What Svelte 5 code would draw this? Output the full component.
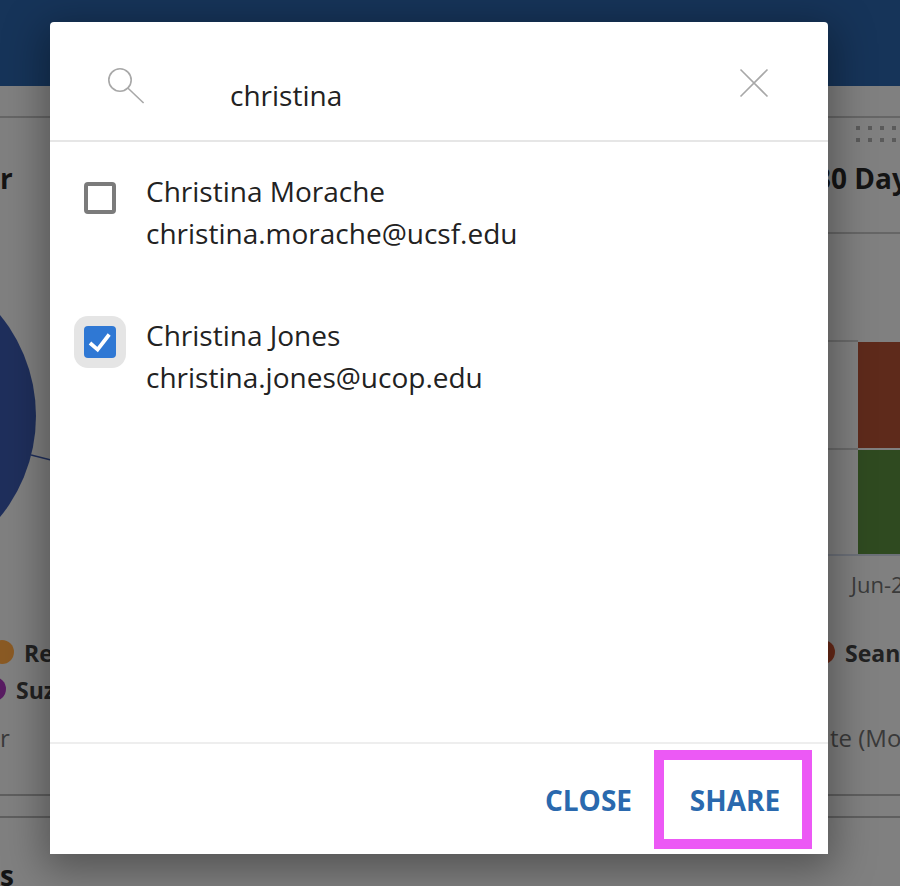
<script>
  let people = $state([
    { name: 'Christina Morache', email: 'christina.morache@ucsf.edu', checked: false },
    { name: 'Christina Jones', email: 'christina.jones@ucop.edu', checked: true }
  ]);
  let query = $state('christina');
  const dots = Array.from({ length: 8 });
</script>

<div class="page">
  <div class="topbar"></div>

  <!-- dashboard behind the dialog, only the edges show -->
  <div class="back">
    <div class="rule r1"></div>
    <div class="rule r2"></div>
    <div class="rule r3"></div>
    <div class="rule r4"></div>
    <div class="grip">
      {#each dots as _}<i></i>{/each}
    </div>
    <b class="bt t-r">r</b>
    <b class="bt t-day">30 Days</b>
    <div class="pie"></div>
    <svg class="leader" width="20" height="10"><path d="M0 1 L20 6" stroke="#1f2f5c" stroke-width="1.4" fill="none" /></svg>
    <div class="tick tk1"></div>
    <div class="tick tk2"></div>
    <div class="bar red"></div>
    <div class="bar green"></div>
    <div class="axis"></div>
    <span class="soft jun">Jun-2</span>
    <span class="dot d1"></span><b class="bt re">Re</b>
    <span class="dot d2"></span><b class="bt suz">Suz</b>
    <span class="dot d3"></span><b class="bt sean">Sean</b>
    <span class="soft lr">r</span>
    <span class="soft mo">te (Mo</span>
    <b class="bt s">s</b>
  </div>

  <div class="overlay">
    <div class="modal">
      <header>
        <svg class="search" width="38" height="38" viewBox="0 0 38 38" fill="none" stroke="#a8a8a8" stroke-width="1.6">
          <circle cx="13" cy="12" r="11.2" />
          <path d="M20.8 20 L36.6 35" />
        </svg>
        <input bind:value={query} />
        <svg class="x" width="30" height="30" viewBox="0 0 30 30" stroke="#a8a8a8" stroke-width="1.6">
          <path d="M1.5 1.5 L28.5 28.5 M28.5 1.5 L1.5 28.5" />
        </svg>
      </header>

      <div class="list">
        {#each people as p}
          <label class="person">
            <span class="halo" class:on={p.checked}>
              <span class="box" class:checked={p.checked}>
                {#if p.checked}
                  <svg width="24" height="24" viewBox="0 0 24 24" fill="none" stroke="#fff" stroke-width="3.8">
                    <path d="M2 13 L9.6 19.6 L21.2 4.5" />
                  </svg>
                {/if}
              </span>
            </span>
            <input type="checkbox" bind:checked={p.checked} />
            <span class="who">
              <span>{p.name}</span>
              <span>{p.email}</span>
            </span>
          </label>
        {/each}
      </div>

      <footer>
        <button class="action">CLOSE</button>
        <button class="action share">SHARE</button>
      </footer>
    </div>
  </div>
</div>

<style>
  :global(body) {
    margin: 0;
    font-family: "Open Sans", sans-serif;
  }
  .page {
    position: relative;
    width: 900px;
    height: 886px;
    overflow: hidden;
    background: #808080;
  }
  .topbar {
    height: 86px;
    background: #163459;
  }

  .back {
    position: absolute;
    inset: 0;
    overflow: hidden;
    color: #141414;
    font-size: 26px;
  }
  .back > * {
    position: absolute;
    white-space: nowrap;
  }
  .rule {
    left: 0;
    right: 0;
    height: 2px;
    background: #666;
  }
  .r1 { top: 116px; }
  .r2 { top: 232px; left: 828px; }
  .r3 { top: 794px; background: #5f5f5f; }
  .r4 { top: 816px; background: #5f5f5f; }
  .grip {
    left: 856px;
    top: 126px;
    display: grid;
    grid-template-columns: repeat(4, 4px);
    gap: 8px;
  }
  .grip i {
    width: 4px;
    height: 4px;
    background: #5a5a5a;
  }
  .bt {
    font-weight: 700;
    line-height: 1;
  }
  .t-r { left: 0; top: 164px; font-size: 28px; }
  .t-day { left: 815px; top: 164px; font-size: 28px; }
  .pie {
    left: -284px;
    top: 256px;
    width: 320px;
    height: 320px;
    border-radius: 50%;
    background: #1f2f5c;
  }
  .leader { left: 31px; top: 454px; }
  .tick {
    left: 828px;
    width: 30px;
    height: 2px;
    background: #6a6a6a;
  }
  .tk1 { top: 340px; }
  .tk2 { top: 448px; }
  .bar {
    left: 858px;
    width: 42px;
  }
  .red { top: 342px; height: 106px; background: #5e2a1b; }
  .green { top: 450px; height: 104px; background: #2f4a20; }
  .axis {
    left: 828px;
    width: 72px;
    top: 554px;
    height: 2px;
    background: #6c7078;
  }
  .soft {
    color: #3a3a3a;
    line-height: 1;
  }
  .jun { left: 851px; top: 573px; font-size: 22px; }
  .dot {
    width: 24px;
    height: 24px;
    border-radius: 50%;
  }
  .d1 { left: -10px; top: 640px; background: #8a5a24; }
  .d2 { left: -18px; top: 677px; background: #591c62; }
  .d3 { left: 811px; top: 640px; background: #6a2a18; }
  .re { left: 24px; top: 642px; font-size: 23px; color: #222; }
  .suz { left: 16px; top: 679px; font-size: 23px; color: #222; }
  .sean { left: 845px; top: 642px; font-size: 23px; color: #222; }
  .lr { left: 0; top: 726px; font-size: 24px; }
  .mo { left: 830px; top: 726px; font-size: 24px; }
  .s { left: 0; top: 861px; font-size: 28px; }

  .overlay {
    position: absolute;
    inset: 0;
    box-sizing: border-box;
    padding: 22px 72px 32px 50px;
    display: flex;
  }
  .modal {
    flex: 1;
    display: flex;
    flex-direction: column;
    background: #fff;
    border-radius: 4px 4px 0 0;
    box-shadow: 0 10px 40px 6px rgba(0, 0, 0, 0.35);
    color: #222;
  }
  header {
    height: 118px;
    flex: none;
    border-bottom: 2px solid #e6e6e6;
    display: flex;
    align-items: flex-start;
  }
  .search {
    margin: 46px 0 0 57px;
    flex: none;
  }
  header input {
    margin: 52px 0 0 85px;
    flex: 1;
    min-width: 0;
    border: 0;
    outline: 0;
    padding: 0;
    font: 28px/42px "Open Sans", sans-serif;
    height: 42px;
    color: #222;
  }
  .x {
    margin: 46px 59px 0 0;
    flex: none;
  }
  .list {
    flex: 1;
    padding-top: 28px;
    display: flex;
    flex-direction: column;
    gap: 60px;
  }
  .person {
    display: flex;
    align-items: flex-start;
    padding-left: 24px;
    font-size: 28px;
    line-height: 42px;
  }
  .person input {
    display: none;
  }
  .halo {
    width: 52px;
    height: 52px;
    margin: 2px 20px 0 0;
    border-radius: 14px;
    display: flex;
    align-items: center;
    justify-content: center;
    flex: none;
  }
  .halo.on {
    background: #e5e5e5;
  }
  .box {
    width: 32px;
    height: 32px;
    box-sizing: border-box;
    border: 4px solid #7b7b7b;
    border-radius: 4px;
    display: flex;
    align-items: center;
    justify-content: center;
  }
  .box.checked {
    background: #2f78d4;
    border: 0;
  }
  .who {
    display: flex;
    flex-direction: column;
  }
  footer {
    height: 104px;
    flex: none;
    border-top: 2px solid #eeeeee;
    display: flex;
    align-items: flex-start;
    justify-content: flex-end;
    padding: 6px 16px 0 0;
  }
  .action {
    background: none;
    border: 0;
    padding: 0;
    font: 700 28px/1 "Open Sans", sans-serif;
    color: #2a69ae;
    height: 99px;
    box-sizing: border-box;
  }
  .share {
    width: 158px;
    margin-left: 22px;
    padding-left: 4px;
    border: 10px solid #ec59f5;
  }
</style>
